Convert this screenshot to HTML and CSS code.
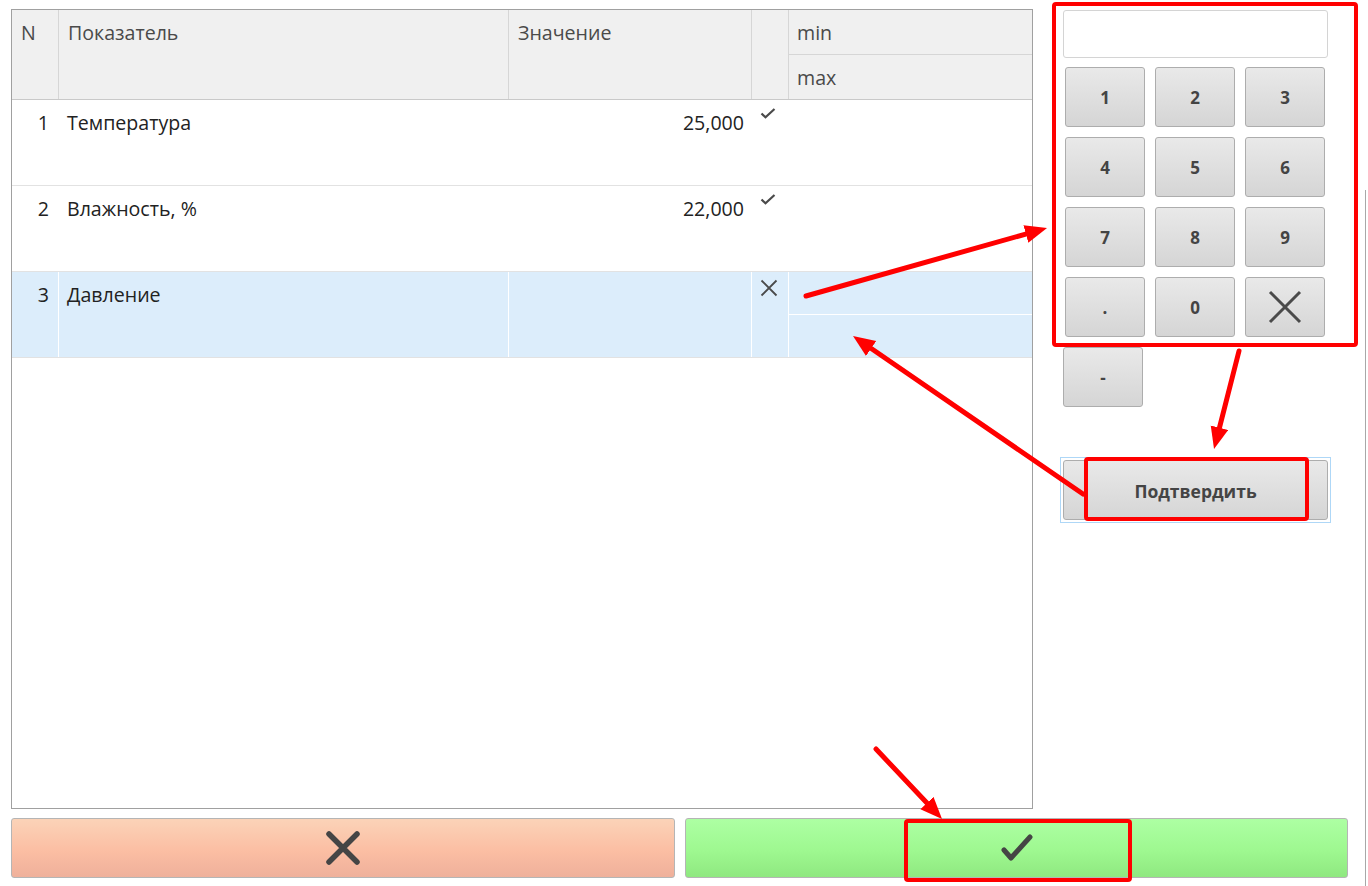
FILE: index.html
```html
<!DOCTYPE html>
<html lang="ru">
<head>
<meta charset="utf-8">
<title>Показатели</title>
<link rel="stylesheet" href="styles.css">
</head>
<body>
<div class="app">
  <div class="top">
    <div class="grid">
      <div class="thead">
        <div class="hc hc-n">N</div>
        <div class="hc">Показатель</div>
        <div class="hc">Значение</div>
        <div class="hc"></div>
        <div class="hc hc-mm">
          <div class="mm-min">min</div>
          <div class="mm-max">max</div>
        </div>
      </div>
      <div class="row">
        <div class="c c-n">1</div>
        <div class="c">Температура</div>
        <div class="c c-val">25,000</div>
        <div class="c c-ic"><svg class="ic-check" width="16" height="11" viewBox="0 0 16 11"><path d="M1.5 5.5 L5.5 9.3 L14.5 1" fill="none" stroke="#4a4a4a" stroke-width="2.2"/></svg></div>
        <div class="c c-mm"><div class="mm-a"></div><div class="mm-b"></div></div>
      </div>
      <div class="row">
        <div class="c c-n">2</div>
        <div class="c">Влажность, %</div>
        <div class="c c-val">22,000</div>
        <div class="c c-ic"><svg class="ic-check" width="16" height="11" viewBox="0 0 16 11"><path d="M1.5 5.5 L5.5 9.3 L14.5 1" fill="none" stroke="#4a4a4a" stroke-width="2.2"/></svg></div>
        <div class="c c-mm"><div class="mm-a"></div><div class="mm-b"></div></div>
      </div>
      <div class="row row-sel">
        <div class="c c-n">3</div>
        <div class="c">Давление</div>
        <div class="c c-val"></div>
        <div class="c c-ic"><svg class="ic-x" width="18" height="18" viewBox="0 0 18 18"><path d="M1.5 1.5 L16.5 16.5 M16.5 1.5 L1.5 16.5" fill="none" stroke="#4a4a4a" stroke-width="1.8"/></svg></div>
        <div class="c c-mm"><div class="mm-a"></div><div class="mm-b"></div></div>
      </div>
    </div>
    <div class="side">
      <div class="display"></div>
      <div class="keys">
        <button class="key">1</button>
        <button class="key">2</button>
        <button class="key">3</button>
        <button class="key">4</button>
        <button class="key">5</button>
        <button class="key">6</button>
        <button class="key">7</button>
        <button class="key">8</button>
        <button class="key">9</button>
        <button class="key">.</button>
        <button class="key">0</button>
        <button class="key"><svg width="34" height="34" viewBox="0 0 34 34"><path d="M2 2 L32 32 M32 2 L2 32" fill="none" stroke="#4a4a4a" stroke-width="3"/></svg></button>
      </div>
      <button class="key key-minus">-</button>
      <div class="confirm-wrap"><button class="key key-confirm">Подтвердить</button></div>
    </div>
  </div>
  <div class="bottom">
    <button class="big big-cancel"><svg width="36" height="36" viewBox="0 0 36 36"><path d="M4 4 L32 32 M32 4 L4 32" fill="none" stroke="#454545" stroke-width="5.5" stroke-linecap="round"/></svg></button>
    <button class="big big-ok"><svg width="34" height="28" viewBox="0 0 34 28"><path d="M4 16 L11 24 L30 3" fill="none" stroke="#454545" stroke-width="5" stroke-linecap="round" stroke-linejoin="round"/></svg></button>
  </div>
</div>
<div class="edge-line"></div>
<svg class="notes" width="1368" height="886" viewBox="0 0 1368 886">
  <defs>
    <marker id="ah" markerUnits="userSpaceOnUse" markerWidth="24" markerHeight="20" refX="10" refY="9" orient="auto">
      <path d="M0 0 L22 9 L0 18 Z" fill="#ff0000"/>
    </marker>
  </defs>
  <g fill="none" stroke="#ff0000" stroke-width="4">
    <rect x="1054" y="4" width="302" height="341" rx="2"/>
    <rect x="1086" y="459" width="221" height="60" rx="2"/>
    <rect x="906" y="821" width="224" height="59" rx="2"/>
  </g>
  <g fill="none" stroke="#ff0000" stroke-width="5" stroke-linecap="round">
    <line x1="806" y1="296" x2="1035.5" y2="231.3" marker-end="url(#ah)"/>
    <line x1="1083" y1="494" x2="862.9" y2="342.8" marker-end="url(#ah)"/>
    <line x1="1239" y1="351" x2="1217" y2="437.4" marker-end="url(#ah)"/>
    <line x1="876" y1="749" x2="933.8" y2="810.3" marker-end="url(#ah)"/>
  </g>
</svg>
</body>
</html>
```

FILE: styles.css
```css
* { box-sizing: border-box; }
html, body { margin: 0; padding: 0; background: #fff; }
body {
  font-family: "Open Sans", "Noto Sans", "Liberation Sans", sans-serif;
  color: #333;
  width: 1368px;
  height: 886px;
  overflow: hidden;
  position: relative;
}
.app { padding: 9px 0 0 11px; }
.top { display: flex; height: 800px; }

.grid {
  width: 1022px;
  height: 800px;
  border: 1px solid #a0a0a0;
  background: #fff;
}
.thead {
  display: grid;
  grid-template-columns: 47px 450px 243px 37px 243px;
  height: 90px;
  background: #f0f0f0;
  border-bottom: 1px solid #c9c9c9;
  font-size: 19.6px;
  color: #4a4a4a;
}
.hc {
  border-right: 1px solid #d6d6d6;
  padding: 10px 0 0 9px;
  line-height: 26px;
}
.hc-mm { border-right: 0; padding: 0; display: flex; flex-direction: column; }
.mm-min { height: 45px; border-bottom: 1px solid #d6d6d6; padding: 10px 0 0 8px; }
.mm-max { flex: 1; padding: 10px 0 0 8px; }

.row {
  display: grid;
  grid-template-columns: 47px 450px 243px 37px 243px;
  height: 86px;
  border-bottom: 1px solid #e2e2e2;
  font-size: 19.6px;
  color: #222;
}
.c {
  border-right: 1px solid transparent;
  padding: 10px 0 0 8px;
  line-height: 26px;
}
.c-n { text-align: right; padding: 10px 9px 0 0; }
.c-val { text-align: right; padding: 10px 7px 0 0; }
.c-ic { padding: 8px 0 0 8px; line-height: 0; }
.c-ic .ic-x { margin-top: -1px; }
.c-mm { border-right: 0; padding: 0; display: flex; flex-direction: column; }
.mm-a { height: 43px; border-bottom: 1px solid transparent; }
.mm-b { flex: 1; }
.row-sel { background: #dcedfb; }
.row-sel .c { border-right-color: #ffffff; }
.row-sel .c-mm { border-right: 0; }
.row-sel .mm-a { border-bottom-color: #ffffff; }

.side {
  position: relative;
  padding: 1px 0 0 30px;
  width: 300px;
}
.display {
  width: 265px;
  height: 48px;
  border: 1px solid #d4d4d4;
  border-radius: 3px;
  background: #fff;
}
.keys {
  display: grid;
  grid-template-columns: repeat(3, 80px);
  grid-auto-rows: 60px;
  gap: 10px;
  margin: 9px 0 0 2px;
}
.key {
  display: flex;
  align-items: center;
  justify-content: center;
  width: 80px;
  height: 60px;
  padding: 0;
  border: 1px solid #adadad;
  border-radius: 3px;
  background: linear-gradient(#e9e9e9, #d5d5d5);
  font-family: "Open Sans", "Noto Sans", "Liberation Sans", sans-serif;
  font-weight: 700;
  font-size: 17px;
  color: #444;
}
.key-minus { margin-top: 10px; }
.confirm-wrap {
  margin-top: 53px;
  width: 265px;
  outline: 1px solid #aed7f7;
  outline-offset: 2px;
}
.key-confirm { width: 265px; font-size: 17.5px; padding-top: 2px; }

.bottom {
  display: flex;
  gap: 10px;
  margin-top: 9px;
}
.big {
  display: flex;
  align-items: center;
  justify-content: center;
  height: 60px;
  padding: 0;
  border: 1px solid #b5b5b5;
  border-radius: 3px;
}
.big-cancel {
  width: 664px;
  background: linear-gradient(#fbd3b8, #fbbea3 55%, #efb09b);
}
.big-ok {
  width: 663px;
  background: linear-gradient(#adffa3, #9ef890 55%, #8fe880);
}

.edge-line {
  position: absolute;
  left: 1365px;
  top: 190px;
  width: 1px;
  height: 696px;
  background: #a8a8a8;
}
.notes {
  position: absolute;
  left: 0;
  top: 0;
  pointer-events: none;
}
```
